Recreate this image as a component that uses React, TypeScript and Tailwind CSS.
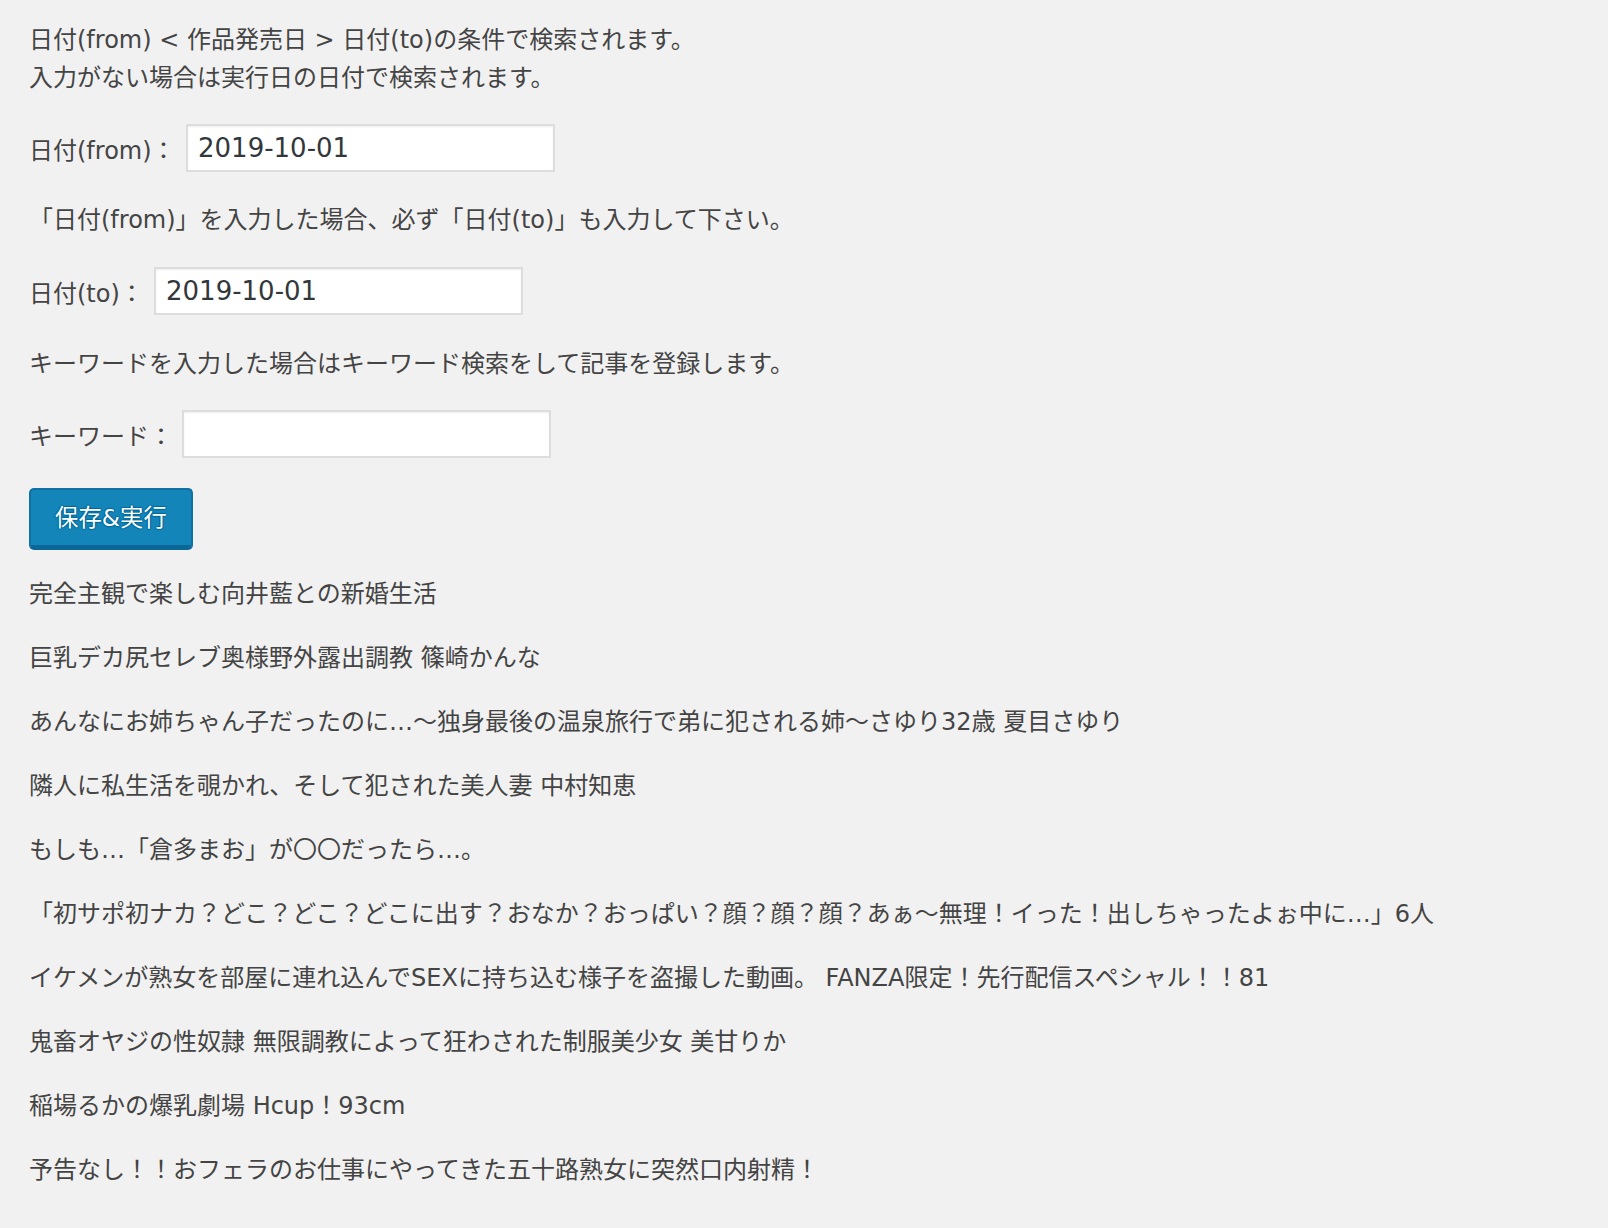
import type { ReactNode } from 'react';

// Latin glyphs from DejaVu Sans (closest widths to the original's Latin), CJK from Noto.
const FONT = "font-['DejaVu_Sans','Noto_Sans_CJK_JP',sans-serif]";

const RESULTS = [
  '完全主観で楽しむ向井藍との新婚生活',
  '巨乳デカ尻セレブ奥様野外露出調教 篠崎かんな',
  'あんなにお姉ちゃん子だったのに…〜独身最後の温泉旅行で弟に犯される姉〜さゆり32歳 夏目さゆり',
  '隣人に私生活を覗かれ、そして犯された美人妻 中村知恵',
  'もしも…「倉多まお」が〇〇だったら…。',
  '「初サポ初ナカ？どこ？どこ？どこに出す？おなか？おっぱい？顔？顔？顔？あぁ〜無理！イった！出しちゃったよぉ中に…」6人',
  'イケメンが熟女を部屋に連れ込んでSEXに持ち込む様子を盗撮した動画。 FANZA限定！先行配信スペシャル！！81',
  '鬼畜オヤジの性奴隷 無限調教によって狂わされた制服美少女 美甘りか',
  '稲場るかの爆乳劇場 Hcup！93cm',
  '予告なし！！おフェラのお仕事にやってきた五十路熟女に突然口内射精！',
];

// Label + text field on one row. Label width fixed so the field lands where the
// original form put it.
function Field({ label, labelWidth, value }: { label: ReactNode; labelWidth: string; value?: string }) {
  return (
    <div className="flex items-center">
      <span className={`${labelWidth} mt-[6px] shrink-0 whitespace-nowrap`}>{label}</span>
      <input
        type="text"
        defaultValue={value}
        className="h-[48px] w-[369px] border-2 border-[#dddddd] bg-white px-[10px] text-[26px] text-[#32373c] shadow-[inset_0_1px_2px_rgba(0,0,0,0.07)] outline-none"
      />
    </div>
  );
}

export default function App() {
  return (
    <div className={`min-h-[1228px] bg-[#f1f1f1] px-[29px] pt-[21px] text-[24px] leading-[38px] text-[#444444] ${FONT}`}>
      <p>
        日付(from) &lt; 作品発売日 &gt; 日付(to)の条件で検索されます。
        <br />
        入力がない場合は実行日の日付で検索されます。
      </p>

      <div className="mt-[27px]">
        <Field label="日付(from)：" labelWidth="w-[157px]" value="2019-10-01" />
      </div>

      <p className="mt-[29px]">「日付(from)」を入力した場合、必ず「日付(to)」も入力して下さい。</p>

      <div className="mt-[28px]">
        <Field label="日付(to)：" labelWidth="w-[125px]" value="2019-10-01" />
      </div>

      <p className="mt-[30px]">キーワードを入力した場合はキーワード検索をして記事を登録します。</p>

      <div className="mt-[27px]">
        <Field label="キーワード：" labelWidth="w-[153px]" />
      </div>

      <button
        type="button"
        className="mt-[30px] block h-[62px] w-[164px] rounded-[5px] border-2 border-[#0e70a3] border-b-[5px] border-b-[#0b6797] bg-[#1385b8] text-[23.4px] text-white [text-shadow:0_-1px_1px_#006799,1px_0_1px_#006799,0_1px_1px_#006799,-1px_0_1px_#006799]"
      >
        保存&amp;実行
      </button>

      <div className="mt-[25px] flex flex-col gap-[26px] pb-[40px]">
        {RESULTS.map((title) => (
          <p key={title} className="whitespace-nowrap">
            {title}
          </p>
        ))}
      </div>
    </div>
  );
}
